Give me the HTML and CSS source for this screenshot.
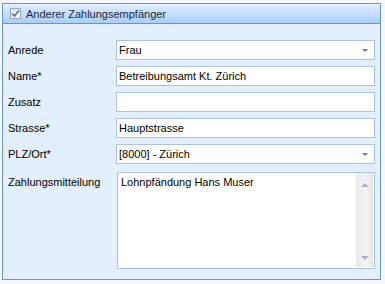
FILE: index.html
```html
<!DOCTYPE html>
<html lang="de">
<head>
    <meta charset="UTF-8">
    <title>Anderer Zahlungsempfänger</title>
    <link rel="stylesheet" href="styles.css">
</head>
<body>
    <div class="group-panel">
        <div class="group-header">
            <span class="check-box">
                <svg width="9" height="9" viewBox="0 0 9 9">
                    <path d="M1 4.5 L3.5 7 L8 1.5" fill="none" stroke="#5e7290" stroke-width="1.6"/>
                </svg>
            </span>
            <span class="header-text">Anderer Zahlungsempfänger</span>
        </div>

        <div class="form-grid">
            <div class="label">Anrede</div>
            <div class="field combo">
                <span class="value">Frau</span>
                <span class="drop-arrow"></span>
            </div>

            <div class="label">Name*</div>
            <div class="field"><span class="value">Betreibungsamt Kt. Zürich</span></div>

            <div class="label">Zusatz</div>
            <div class="field"></div>

            <div class="label">Strasse*</div>
            <div class="field"><span class="value">Hauptstrasse</span></div>

            <div class="label">PLZ/Ort*</div>
            <div class="field combo">
                <span class="value">[8000] - Zürich</span>
                <span class="drop-arrow"></span>
            </div>

            <div class="label label-top">Zahlungsmitteilung</div>
            <div class="field memo">
                <span class="memo-text">Lohnpfändung Hans Muser</span>
                <div class="scroll-bar">
                    <span class="arrow-up"></span>
                    <span class="arrow-down"></span>
                </div>
            </div>
        </div>
    </div>
</body>
</html>
```

FILE: styles.css
```css
body {
    margin: 0;
    background-color: #f4f8fd;
    font-family: "Liberation Sans", Arial, sans-serif;
    font-size: 11px;
    color: #000;
}

.group-panel {
    margin: 3px 0 0 2px;
    width: 377px;
    height: 275px;
    border: 1px solid #6794d2;
    background-color: #e3efff;
    display: flex;
    flex-direction: column;
}

.group-header {
    height: 19px;
    border-bottom: 1px solid #6794d2;
    background: linear-gradient(to bottom, #e2eeff, #a9cdf8);
    display: flex;
    align-items: center;
    padding-left: 7px;
    gap: 5px;
}

.check-box {
    width: 11px;
    height: 11px;
    box-sizing: border-box;
    border: 1px solid #9aa7b8;
    background: linear-gradient(to bottom right, #dfe3e8, #f7f8fa);
    display: flex;
    align-items: center;
    justify-content: center;
}

.header-text {
    color: #15283f;
}

.form-grid {
    display: grid;
    grid-template-columns: 108px 259px;
    grid-template-rows: 20px 20px 20px 20px 20px 97px;
    row-gap: 6px;
    padding: 16px 0 0 5px;
}

.label {
    display: flex;
    align-items: center;
}

.label-top {
    align-items: flex-start;
    padding-top: 4px;
    margin-top: 2px;
}

.field {
    box-sizing: border-box;
    border: 1px solid #abc1de;
    background-color: #fff;
    display: flex;
    align-items: center;
    position: relative;
}

.value {
    padding-left: 2px;
}

.drop-arrow {
    position: absolute;
    right: 6px;
    top: 8px;
    width: 0;
    height: 0;
    border-left: 3px solid transparent;
    border-right: 3px solid transparent;
    border-top: 3px solid #6280b0;
}

.memo {
    margin-top: 2px;
    margin-left: 1px;
    height: 97px;
    align-items: flex-start;
}

.memo-text {
    flex-grow: 1;
    padding: 3px 0 0 3px;
}

.scroll-bar {
    width: 17px;
    align-self: stretch;
    margin: 0 1px 1px 0;
    background: linear-gradient(to right, #eaeaea, #f3f3f3 60%, #e4e4e4);
    display: flex;
    flex-direction: column;
    justify-content: space-between;
    align-items: center;
    padding: 10px 0 7px;
    box-sizing: border-box;
}

.arrow-up,
.arrow-down {
    width: 0;
    height: 0;
    border-left: 4px solid transparent;
    border-right: 4px solid transparent;
}

.arrow-up {
    border-bottom: 4px solid #a7b3c7;
}

.arrow-down {
    border-top: 4px solid #a7b3c7;
}
```
